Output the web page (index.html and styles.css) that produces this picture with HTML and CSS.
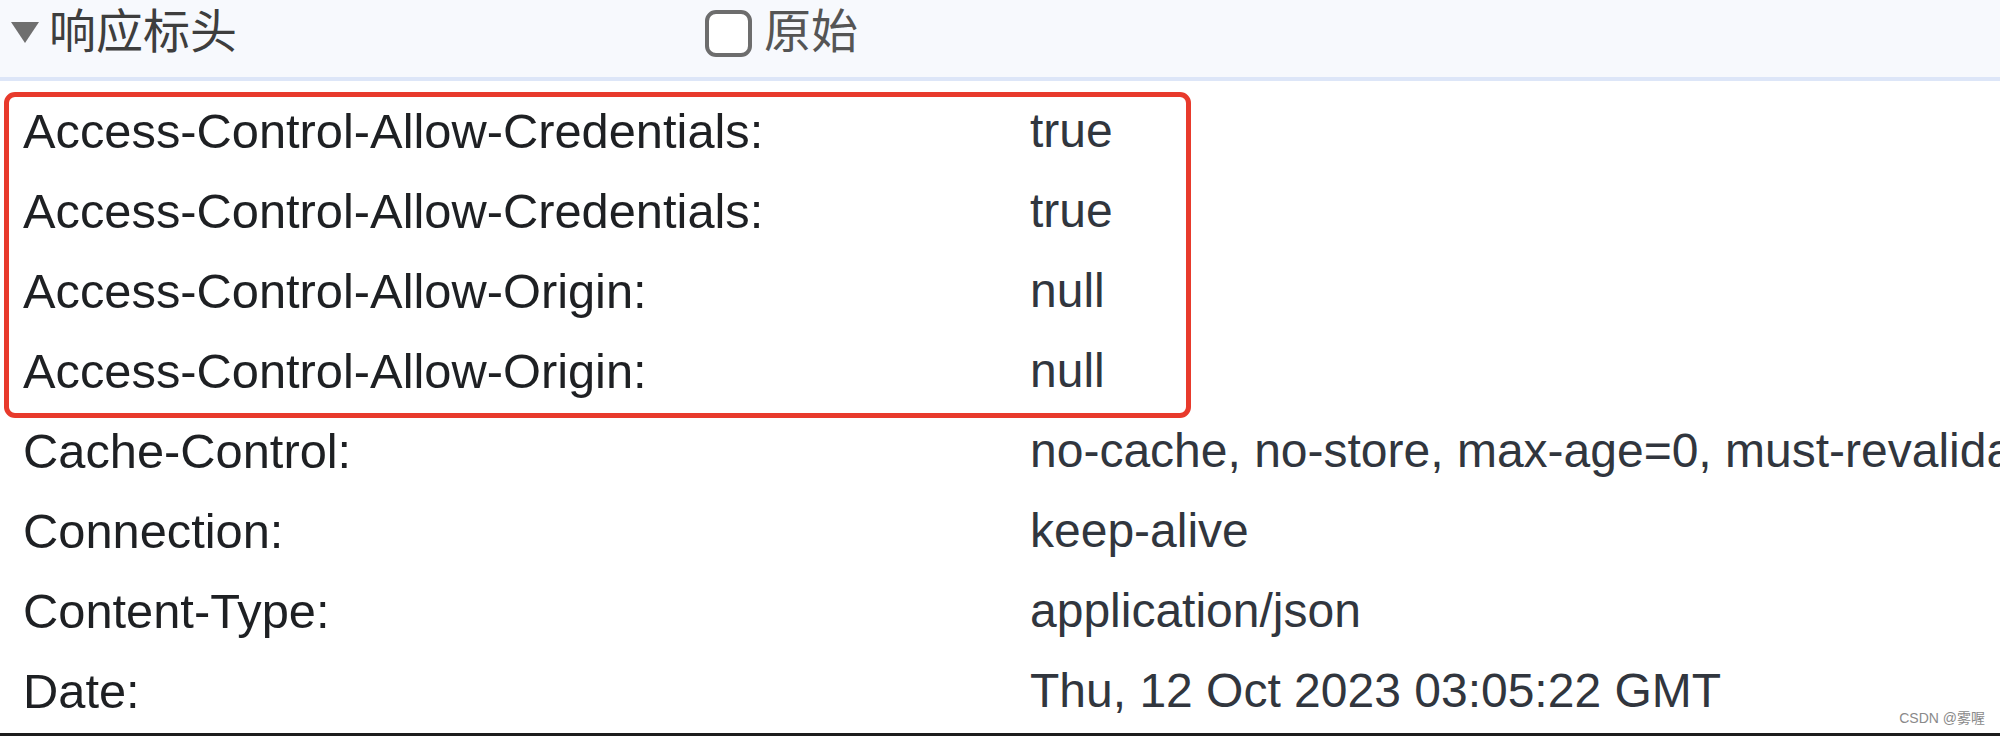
FILE: index.html
```html
<!DOCTYPE html>
<html lang="zh-CN">
<head>
  <meta charset="UTF-8" />
  <meta name="viewport" content="width=device-width, initial-scale=1.0"/>
  <title>响应标头</title>
  <link rel="stylesheet" href="styles.css">
</head>
<body>
  <div class="section-head">
    <svg class="toggle" width="28" height="21" viewBox="0 0 28 21">
      <polygon points="0,0 28,0 14,21" fill="#6f6f6f"/>
    </svg>
    <span class="section-title">响应标头</span>
    <label class="raw">
      <span class="checkbox"></span>
      <span class="raw-text">原始</span>
    </label>
  </div>

  <div class="headers">
    <div class="mark"></div>
    <div class="row"><span class="name">Access-Control-Allow-Credentials:</span><span class="value">true</span></div>
    <div class="row"><span class="name">Access-Control-Allow-Credentials:</span><span class="value">true</span></div>
    <div class="row"><span class="name">Access-Control-Allow-Origin:</span><span class="value">null</span></div>
    <div class="row"><span class="name">Access-Control-Allow-Origin:</span><span class="value">null</span></div>
    <div class="row"><span class="name">Cache-Control:</span><span class="value">no-cache, no-store, max-age=0, must-revalidate</span></div>
    <div class="row"><span class="name">Connection:</span><span class="value">keep-alive</span></div>
    <div class="row"><span class="name">Content-Type:</span><span class="value">application/json</span></div>
    <div class="row"><span class="name">Date:</span><span class="value">Thu, 12 Oct 2023 03:05:22 GMT</span></div>
  </div>

  <div class="bottom-bar"></div>
  <div class="watermark">CSDN @雾喔</div>
</body>
</html>
```

FILE: styles.css
```css
html, body {
  margin: 0;
  padding: 0;
  background: #ffffff;
  width: 2000px;
  height: 736px;
  overflow: hidden;
}

body {
  position: relative;
  font-family: 'Liberation Sans', Arial, 'Noto Sans CJK SC', sans-serif;
}

.section-head {
  height: 77px;
  background-color: #f7f9fd;
  border-bottom: 4px solid #dde6f8;
  display: flex;
  align-items: flex-start;
  font-family: 'Noto Sans CJK SC', sans-serif;
}

.toggle {
  margin-left: 11px;
  margin-top: 22px;
  flex-shrink: 0;
}

.section-title {
  width: 656px;
  margin-left: 10px;
  margin-top: 4px;
  font-size: 47px;
  line-height: 47px;
  color: #3e3e3e;
}

.raw {
  display: flex;
  align-items: flex-start;
}

.checkbox {
  width: 47px;
  height: 47px;
  box-sizing: border-box;
  margin-top: 10px;
  border: 4px solid #6d6d6d;
  border-radius: 11px;
  background: #ffffff;
}

.raw-text {
  margin-left: 12px;
  margin-top: 4px;
  font-size: 47px;
  line-height: 47px;
  color: #555555;
}

.headers {
  position: relative;
  padding-top: 10px;
}

.row {
  display: grid;
  grid-template-columns: 1007px 1fr;
  height: 80px;
  align-items: center;
  padding-left: 23px;
  font-size: 48.8px;
  line-height: 80px;
  white-space: nowrap;
}

.name {
  color: #1e2023;
}

.value {
  color: #31363e;
  font-size: 48px;
  overflow: hidden;
}

/* red annotation drawn over the first four rows */
.mark {
  position: absolute;
  left: 4px;
  top: 11px;
  width: 1187px;
  height: 326px;
  box-sizing: border-box;
  border: 5px solid #e83a2c;
  border-radius: 11px;
  pointer-events: none;
}

.bottom-bar {
  margin-top: 2px;
  height: 3px;
  background-color: #1c1c1c;
}

.watermark {
  position: absolute;
  right: 15px;
  bottom: 9px;
  font-size: 14px;
  color: #8a8a8a;
  font-family: 'Liberation Sans', 'Noto Sans CJK SC', sans-serif;
}
```
